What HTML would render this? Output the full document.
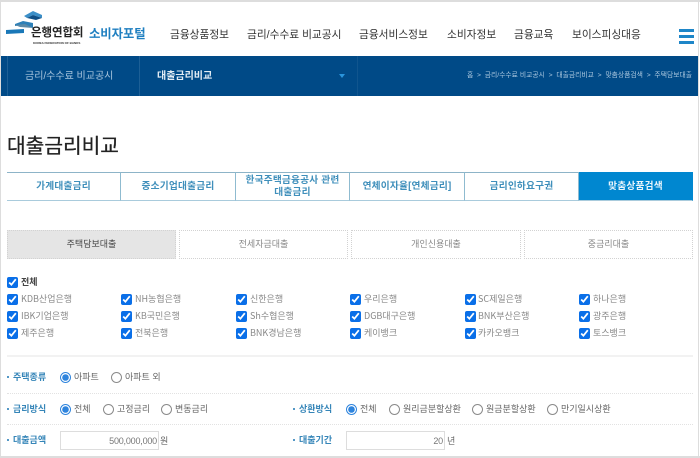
<!DOCTYPE html>
<html lang="ko"><head><meta charset="utf-8"><title>대출금리비교</title>
<style>
*{box-sizing:border-box}
html,body{margin:0;padding:0;background:#fff}
body{width:700px;height:458px;position:relative;overflow:hidden;font-family:"Liberation Sans","Noto Sans CJK KR",sans-serif}
.a{position:absolute;white-space:nowrap;line-height:1}
.m{font-size:10.7px;color:#333;top:30px;height:12px}
.tab{position:absolute;top:172px;height:29px;border-top:1px solid #8db4c8;border-bottom:1px solid #a9cbdc;border-right:1px solid #8fbbd0;color:#3f8fbb;font-size:9.7px;font-weight:bold;text-align:center;display:flex;align-items:center;justify-content:center;line-height:12px;letter-spacing:.2px}
.sub{position:absolute;top:230px;height:29px;border:1px dotted #d2d2d2;font-size:9px;color:#888;text-align:center;line-height:27px}
.c{position:absolute;width:11px;height:11px;margin:0;accent-color:#0a6fe8}
.l{position:absolute;font-family:"Noto Sans CJK KR",sans-serif;font-size:9px;color:#888;white-space:nowrap;line-height:12px}
.r{position:absolute;width:11px;height:11px;margin:0;accent-color:#0a6fd8;opacity:.85}
.t{position:absolute;font-size:9px;color:#3585b8;font-weight:bold;white-space:nowrap;line-height:12px}
.t:before{content:"";position:absolute;left:-6px;top:5px;width:2px;height:2px;background:#1e78b4;border-radius:50%}
.d{position:absolute;left:7px;width:686px;border-top:1px dotted #e2e2e2;height:0}
.inp{position:absolute;top:431px;height:19px;border:1px solid #ddd;font-size:9px;color:#777;text-align:right;padding-right:1px;line-height:18px;letter-spacing:-.2px}
</style></head><body>
<div class="a" style="left:0;top:0;width:700px;height:2px;background:#ddd"></div>
<div class="a" style="left:0;top:0;width:1px;height:458px;background:#ddd"></div>
<div class="a" style="left:698px;top:0;width:1px;height:458px;background:#ddd"></div>
<div class="a" style="left:0;top:456px;width:700px;height:2px;background:#ddd"></div>

<svg class="a" style="left:0;top:0" width="50" height="40" viewBox="0 0 50 40">
<path d="M24 16L33 11L42 15L42 18L33 15L27 18Z" fill="#3b8fc8"/><path d="M27 18L33 15L42 18L36 20Z" fill="#0e4f86"/>
<path d="M15 24L23 21L33 23L33 28L25 25L15 26Z" fill="#2d80b8"/><path d="M15 25L25 24L33 28L20 27Z" fill="#5a8aa8"/>
<path d="M6 30L24 29L24 33L6 34Z" fill="#1a78b8"/>
</svg>
<div class="a" style="left:31px;top:28px;font-size:11.5px;font-weight:bold;color:#222;letter-spacing:-.1px">은행연합회</div>
<div class="a" style="left:33px;top:42px;font-size:3px;font-weight:bold;color:#333">KOREA FEDERATION OF BANKS</div>
<div class="a" style="left:89px;top:28px;font-size:12.4px;font-weight:bold;color:#1f7fc0;letter-spacing:-.1px">소비자포털</div>

<div class="a m" style="left:170px">금융상품정보</div>
<div class="a m" style="left:247px">금리/수수료 비교공시</div>
<div class="a m" style="left:359px">금융서비스정보</div>
<div class="a m" style="left:447px">소비자정보</div>
<div class="a m" style="left:514px">금융교육</div>
<div class="a m" style="left:572px">보이스피싱대응</div>
<div class="a" style="left:679px;top:29px;width:15px;height:3px;background:#1e86c8"></div>
<div class="a" style="left:679px;top:35px;width:15px;height:3px;background:#1e86c8"></div>
<div class="a" style="left:679px;top:41px;width:15px;height:3px;background:#1e86c8"></div>

<div class="a" style="left:1px;top:56px;width:697px;height:40px;background:#004a87"></div>
<div class="a" style="left:7px;top:56px;width:1px;height:40px;background:#1c5f96"></div>
<div class="a" style="left:139px;top:56px;width:1px;height:40px;background:#1c5f96"></div>
<div class="a" style="left:357px;top:56px;width:1px;height:40px;background:#10558e"></div>
<div class="a" style="left:25px;top:72px;font-size:10px;color:#a9c6de">금리/수수료 비교공시</div>
<div class="a" style="left:157px;top:72px;font-size:10px;font-weight:bold;color:#e4edf5">대출금리비교</div>
<div class="a" style="left:339px;top:74px;width:0;height:0;border-left:3.5px solid transparent;border-right:3.5px solid transparent;border-top:4px solid #2a95dc"></div>
<div class="a" style="left:467px;top:73px;font-size:6.8px;color:#a9c6de">홈 &nbsp;&gt;&nbsp; 금리/수수료 비교공시 &nbsp;&gt;&nbsp; 대출금리비교 &nbsp;&gt;&nbsp; 맞춤상품검색 &nbsp;&gt;&nbsp; 주택담보대출</div>

<div class="a" style="left:7px;top:137px;font-size:20.3px;color:#222;-webkit-text-stroke:.25px #222">대출금리비교</div>

<div class="tab" style="left:7px;width:114px">가계대출금리</div>
<div class="tab" style="left:121px;width:115px">중소기업대출금리</div>
<div class="tab" style="left:236px;width:114px">한국주택금융공사 관련<br>대출금리</div>
<div class="tab" style="left:350px;width:115px">연체이자율[연체금리]</div>
<div class="tab" style="left:465px;width:114px">금리인하요구권</div>
<div class="tab" style="left:579px;width:114px;background:#0087d0;color:#e8f4fb;border-color:#0087d0;border-bottom-color:#a9cbdc">맞춤상품검색</div>

<div class="sub" style="left:7px;width:169px;background:#e5e5e5;color:#444">주택담보대출</div>
<div class="sub" style="left:179px;width:169px">전세자금대출</div>
<div class="sub" style="left:351px;width:170px">개인신용대출</div>
<div class="sub" style="left:524px;width:169px">중금리대출</div>

<input class="c" type="checkbox" checked style="left:7px;top:277px"><div class="l" style="left:21px;top:276px;color:#444;font-weight:bold">전체</div>
<input class="c" type="checkbox" checked style="left:7px;top:294px"><div class="l" style="left:21px;top:293px">KDB산업은행</div>
<input class="c" type="checkbox" checked style="left:121px;top:294px"><div class="l" style="left:135px;top:293px">NH농협은행</div>
<input class="c" type="checkbox" checked style="left:236px;top:294px"><div class="l" style="left:250px;top:293px">신한은행</div>
<input class="c" type="checkbox" checked style="left:350px;top:294px"><div class="l" style="left:364px;top:293px">우리은행</div>
<input class="c" type="checkbox" checked style="left:465px;top:294px"><div class="l" style="left:478px;top:293px">SC제일은행</div>
<input class="c" type="checkbox" checked style="left:579px;top:294px"><div class="l" style="left:593px;top:293px">하나은행</div>
<input class="c" type="checkbox" checked style="left:7px;top:311px"><div class="l" style="left:21px;top:310px">IBK기업은행</div>
<input class="c" type="checkbox" checked style="left:121px;top:311px"><div class="l" style="left:135px;top:310px">KB국민은행</div>
<input class="c" type="checkbox" checked style="left:236px;top:311px"><div class="l" style="left:250px;top:310px">Sh수협은행</div>
<input class="c" type="checkbox" checked style="left:350px;top:311px"><div class="l" style="left:364px;top:310px">DGB대구은행</div>
<input class="c" type="checkbox" checked style="left:465px;top:311px"><div class="l" style="left:478px;top:310px">BNK부산은행</div>
<input class="c" type="checkbox" checked style="left:579px;top:311px"><div class="l" style="left:593px;top:310px">광주은행</div>
<input class="c" type="checkbox" checked style="left:7px;top:328px"><div class="l" style="left:21px;top:327px">제주은행</div>
<input class="c" type="checkbox" checked style="left:121px;top:328px"><div class="l" style="left:135px;top:327px">전북은행</div>
<input class="c" type="checkbox" checked style="left:236px;top:328px"><div class="l" style="left:250px;top:327px">BNK경남은행</div>
<input class="c" type="checkbox" checked style="left:350px;top:328px"><div class="l" style="left:364px;top:327px">케이뱅크</div>
<input class="c" type="checkbox" checked style="left:465px;top:328px"><div class="l" style="left:478px;top:327px">카카오뱅크</div>
<input class="c" type="checkbox" checked style="left:579px;top:328px"><div class="l" style="left:593px;top:327px">토스뱅크</div>

<div class="a" style="left:7px;top:355px;width:686px;height:2px;background:#f2f2f2"></div>

<div class="t" style="left:13px;top:371px">주택종류</div>
<input class="r" type="radio" name="a" checked style="left:60px;top:372px"><div class="l" style="left:74px;top:371px;color:#666">아파트</div>
<input class="r" type="radio" name="a" style="left:111px;top:372px"><div class="l" style="left:125px;top:371px;color:#666">아파트 외</div>
<div class="d" style="top:393px"></div>

<div class="t" style="left:13px;top:403px">금리방식</div>
<input class="r" type="radio" name="b" checked style="left:60px;top:404px"><div class="l" style="left:74px;top:403px;color:#666">전체</div>
<input class="r" type="radio" name="b" style="left:103px;top:404px"><div class="l" style="left:117px;top:403px;color:#666">고정금리</div>
<input class="r" type="radio" name="b" style="left:161px;top:404px"><div class="l" style="left:175px;top:403px;color:#666">변동금리</div>
<div class="t" style="left:299px;top:403px">상환방식</div>
<input class="r" type="radio" name="c" checked style="left:346px;top:404px"><div class="l" style="left:360px;top:403px;color:#666">전체</div>
<input class="r" type="radio" name="c" style="left:389px;top:404px"><div class="l" style="left:403px;top:403px;color:#666">원리금분할상환</div>
<input class="r" type="radio" name="c" style="left:472px;top:404px"><div class="l" style="left:486px;top:403px;color:#666">원금분할상환</div>
<input class="r" type="radio" name="c" style="left:547px;top:404px"><div class="l" style="left:561px;top:403px;color:#666">만기일시상환</div>
<div class="d" style="top:424px"></div>

<div class="t" style="left:13px;top:434px">대출금액</div>
<div class="inp" style="left:60px;width:99px">500,000,000</div><div class="l" style="left:160px;top:435px;color:#666">원</div>
<div class="t" style="left:299px;top:434px">대출기간</div>
<div class="inp" style="left:346px;width:99px">20</div><div class="l" style="left:447px;top:435px;color:#666">년</div>
</body></html>
